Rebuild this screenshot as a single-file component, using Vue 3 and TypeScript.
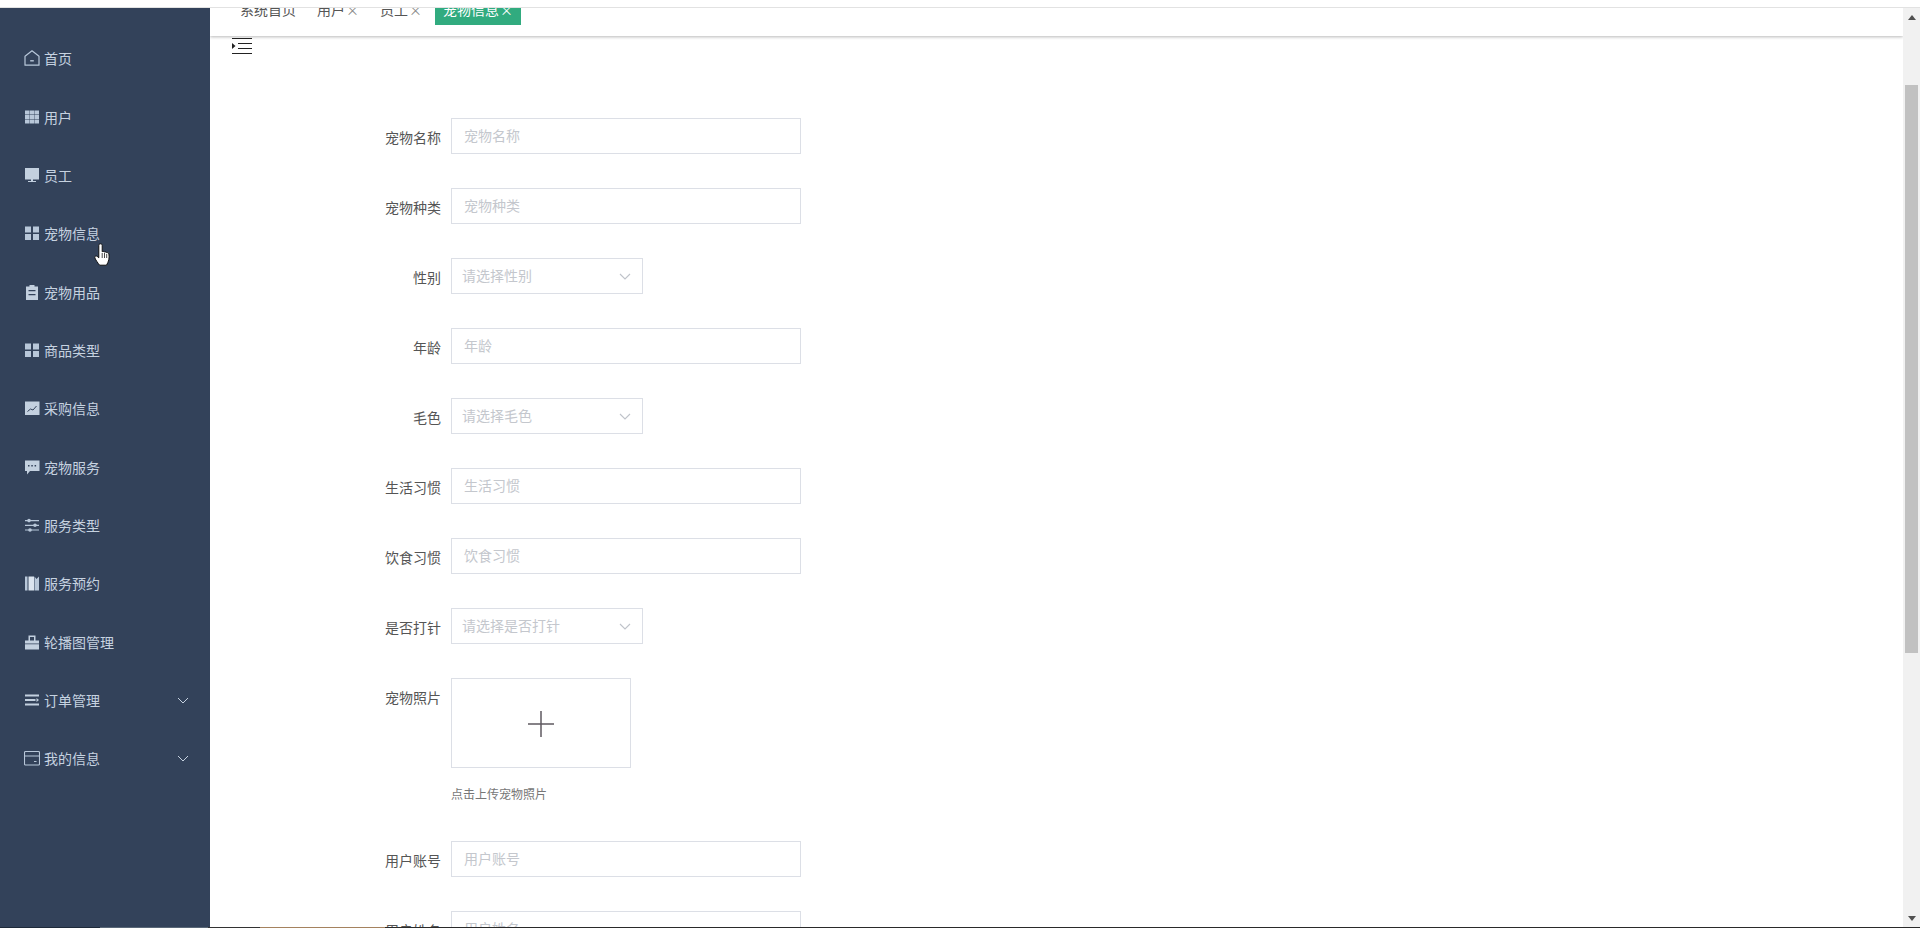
<script setup lang="ts">
interface MenuItem { label: string; icon: string; arrow?: boolean }
const menu: MenuItem[] = [
  { label: '首页', icon: 'home' },
  { label: '用户', icon: 'table' },
  { label: '员工', icon: 'monitor' },
  { label: '宠物信息', icon: 'apps' },
  { label: '宠物用品', icon: 'clip' },
  { label: '商品类型', icon: 'apps' },
  { label: '采购信息', icon: 'chart' },
  { label: '宠物服务', icon: 'chat' },
  { label: '服务类型', icon: 'sliders' },
  { label: '服务预约', icon: 'books' },
  { label: '轮播图管理', icon: 'case' },
  { label: '订单管理', icon: 'list', arrow: true },
  { label: '我的信息', icon: 'wallet', arrow: true },
]
interface Field { label: string; type: 'input' | 'select' | 'upload'; ph?: string }
const fields: Field[] = [
  { label: '宠物名称', type: 'input', ph: '宠物名称' },
  { label: '宠物种类', type: 'input', ph: '宠物种类' },
  { label: '性别', type: 'select', ph: '请选择性别' },
  { label: '年龄', type: 'input', ph: '年龄' },
  { label: '毛色', type: 'select', ph: '请选择毛色' },
  { label: '生活习惯', type: 'input', ph: '生活习惯' },
  { label: '饮食习惯', type: 'input', ph: '饮食习惯' },
  { label: '是否打针', type: 'select', ph: '请选择是否打针' },
  { label: '宠物照片', type: 'upload' },
  { label: '用户账号', type: 'input', ph: '用户账号' },
  { label: '用户姓名', type: 'input', ph: '用户姓名' },
]
</script>

<template>
  <div class="page">
    <div class="topline"></div>
    <div class="main">
      <aside class="side">
        <div v-for="m in menu" :key="m.label" class="item">
          <svg class="ic" viewBox="0 0 16 16">
            <g v-if="m.icon === 'home'" fill="none" stroke="#b8c7d9" stroke-width="1.200">
              <path d="M8 .8 15 6.200V15.200H1V6.200Z" stroke-linejoin="round" /><path d="M6.200 10.800h3.600" stroke-width="1.400" />
            </g>
            <path v-else-if="m.icon === 'table'" fill="#b8c7d9" d="M1 1.500h4.400v4H1zM5.800 1.500h4.400v4H5.800zM10.600 1.500H15v4h-4.400zM1 6h4.400v4H1zM5.800 6h4.400v4H5.800zM10.600 6H15v4h-4.400zM1 10.500h4.400v4H1zM5.800 10.500h4.400v4H5.800zM10.600 10.500H15v4h-4.400z" />
            <path v-else-if="m.icon === 'monitor'" fill="#c3d0df" d="M1 1h14v11.500H1zM4 14h8v1H4zM7 12.500h2V14H7z" />
            <path v-else-if="m.icon === 'apps'" fill="#b8c7d9" d="M1 1.500h6v6H1zM9 1.500h6v6H9zM1 9h6v6H1zM9 9h6v6H9z" />
            <path v-else-if="m.icon === 'clip'" fill="#c3d0df" fill-rule="evenodd" d="M2 2.500h3.500V1h5v1.500H14V16H2zM4.500 6v1.200h7V6zM4.500 10v1.200h7V10z" />
            <g v-else-if="m.icon === 'chart'">
              <path fill="#c3d0df" d="M1 1.500h14.500V15H1z" /><path fill="none" stroke="#33425a" d="M3.500 11.500 6.500 9l2.500 1L12.500 6" />
            </g>
            <g v-else-if="m.icon === 'chat'">
              <path fill="#c3d0df" d="M1 1.500h14.500V12H6l-3 3.500V12H1z" /><path fill="#33425a" d="M4 6h1.500v1.500H4zM7.300 6h1.500v1.500H7.300zM10.600 6h1.500v1.500h-1.500z" />
            </g>
            <g v-else-if="m.icon === 'sliders'" fill="#b8c7d9">
              <path d="M1 3h14v1.200H1zM1 7.700h14v1.200H1zM1 12.400h14v1.200H1z" /><circle cx="5" cy="3.600" r="1.800" /><circle cx="11" cy="8.300" r="1.800" /><circle cx="6" cy="13" r="1.800" />
            </g>
            <g v-else-if="m.icon === 'books'">
              <path fill="#b8c7d9" d="M1 1.500h2.500v14H1z" /><path fill="#dbe4ef" d="M4.500 1.500h5.500v14H4.500z" /><path fill="#b8c7d9" d="M10.500 1.500l2 2.500L15 1.500v14h-4.500z" />
            </g>
            <path v-else-if="m.icon === 'case'" fill="#c3d0df" fill-rule="evenodd" d="M1 6.500h14v3H1zM1 10.300h14V15.500H1zM4.500 6.500V1.500h7v5H10V3H6v3.500z" />
            <path v-else-if="m.icon === 'list'" fill="#c3d0df" d="M1 2.500h14v2H1zM1 7h10.500v2H1zM1 11.500h14v2H1zM12.500 6l2.500 2-2.500 2z" />
            <g v-else-if="m.icon === 'wallet'" fill="none" stroke="#b8c7d9" stroke-width="1.100">
              <rect x=".5" y="1.500" width="15" height="13.500" rx="1" /><path d="M.5 6h15M10 11.500h2.500" />
            </g>
          </svg>
          <span class="lbl">{{ m.label }}</span>
          <svg v-if="m.arrow" class="arr" viewBox="0 0 12 7"><path d="M1 1l5 5 5-5" fill="none" stroke="#c6d2e0" stroke-width="1" /></svg>
        </div>
      </aside>
      <div class="content">
        <header class="tabs">
          <span class="tab">系统首页</span>
          <span class="tab">用户<i>×</i></span>
          <span class="tab">员工<i>×</i></span>
          <span class="tab on">宠物信息<i>×</i></span>
        </header>
        <div class="burger">
          <svg class="burger-ic" viewBox="0 0 20 16" width="20" height="16">
            <path d="M0 .5h20M6 5.500h14M6 10.500h14M0 15.500h20" stroke="#222" stroke-width="1.200" fill="none" />
            <path d="M0 5 3.500 8 0 11z" fill="#222" />
          </svg>
        </div>
        <form class="form">
          <div v-for="f in fields" :key="f.label" class="row" :class="{ tall: f.type === 'upload' }">
            <label class="flabel">{{ f.label }}</label>
            <div v-if="f.type === 'input'" class="box wide">{{ f.ph }}</div>
            <div v-else-if="f.type === 'select'" class="box sel">
              <span>{{ f.ph }}</span>
              <svg class="chev" viewBox="0 0 12 7"><path d="M1 1l5 5 5-5" fill="none" stroke="#bfc3ca" stroke-width="1.100" /></svg>
            </div>
            <div v-else class="up">
              <div class="upbox">
                <svg viewBox="0 0 26 26" width="26" height="26"><path d="M13 0v26M0 13h26" stroke="#5f5a60" stroke-width="1.500" fill="none" /></svg>
              </div>
              <div class="hint">点击上传宠物照片</div>
            </div>
          </div>
        </form>
      </div>
      <div class="sbar">
        <svg class="sarrow" viewBox="0 0 8 5" width="8" height="5"><path d="M4 0 8 5H0z" fill="#505050" /></svg>
        <div class="thumb"></div>
        <svg class="sarrow down" viewBox="0 0 8 5" width="8" height="5"><path d="M0 0h8L4 5z" fill="#505050" /></svg>
      </div>
    </div>
    <svg class="cursor" viewBox="0 0 17 23" width="17" height="23">
      <path d="M6.500 .8c1 0 1.700.7 1.700 1.700v6.200c.9-.5 1.900-.3 2.300.4.800-.4 1.800-.1 2.100.6.900-.3 2.100.2 2.300 1.300.3 1.700.3 4-.1 5.800-.4 1.900-1.300 3.400-2.300 5.400H5.600C4.200 20.400.8 16 .8 14.300c0-1.200 1.400-1.700 2.400-.9l1.600 1.400V2.500c0-1 .7-1.700 1.700-1.700z" fill="#fff" stroke="#111" stroke-width="1" />
      <path d="M8.200 10v5M10.500 10v5M12.700 11v4" stroke="#333" stroke-width=".9" />
    </svg>
    <div class="bottomline"></div>
  </div>
</template>

<style>
html, body { margin: 0; height: 100%; overflow: hidden; background: #fff; }
</style>

<style scoped>
.page {
  position: relative;
  height: 928px;
  display: flex;
  flex-direction: column;
  font-family: "Noto Sans CJK SC", "Liberation Sans", sans-serif;
  overflow: hidden;
}
.topline { height: 7px; background: #fff; border-bottom: 1px solid #e2e2e2; flex: none; }
.main { flex: 1; display: flex; min-height: 0; }
.side { width: 210px; flex: none; background: #33425a; padding-top: 21px; box-sizing: border-box; }
.item { height: 58.35px; display: flex; align-items: center; padding-left: 24px; position: relative; color: #c6d2e0; font-size: 14px; }
.ic { width: 16px; height: 16px; flex: none; }
.lbl { margin-left: 4px; }
.arr { position: absolute; left: 177px; top: 26px; width: 12px; height: 7px; }
.content { flex: 1; min-width: 0; overflow: hidden; position: relative; }
.tabs {
  height: 28px;
  padding: 0 0 11px 30px;
  box-sizing: border-box;
  display: flex;
  align-items: flex-end;
  overflow: hidden;
  gap: 21px;
  box-shadow: 0 1px 3px rgba(0, 0, 0, .28);
  color: #555;
  font-size: 14px;
}
.tab { height: 28px; line-height: 25px; flex: none; white-space: nowrap; }
.tab i { font-style: normal; color: #888; font-size: 13px; margin-left: 1px; }
.tab.on { background: #31ab7f; color: #fff; padding: 0 8px; width: 86px; box-sizing: border-box; margin-left: -8px; }
.tab.on i { color: #fff; }
.burger { height: 16px; margin: 2px 0 0 22px; }
.burger-ic { display: block; }
.form { padding-top: 64px; }
.row { height: 36px; margin-bottom: 34px; display: flex; }
.row.tall { height: 129px; margin-bottom: 34px; }
.flabel { width: 231px; text-align: right; padding-top: 7px; line-height: 24px; color: #555; font-size: 14px; flex: none; box-sizing: border-box; }
.box {
  margin-left: 10px;
  height: 36px;
  box-sizing: border-box;
  border: 1px solid #dcdfe6;
  font-size: 14px;
  color: #c4c7cd;
  line-height: 33px;
  padding-left: 12px;
}
.wide { width: 350px; }
.sel { width: 192px; position: relative; padding-left: 10px; }
.chev { position: absolute; right: 11px; top: 14px; width: 12px; height: 7px; }
.up { margin-left: 10px; }
.upbox { width: 180px; height: 90px; box-sizing: border-box; border: 1px solid #dcdfe6; display: flex; align-items: center; justify-content: center; padding-top: 2px; }
.hint { margin-top: 16px; font-size: 12px; line-height: 20px; color: #777; }
.sbar { width: 17px; flex: none; background: #f1f1f1; position: relative; display: flex; flex-direction: column; align-items: center; }
.sarrow { position: absolute; top: 7px; }
.sarrow.down { top: auto; bottom: 7px; }
.thumb { position: absolute; left: 2px; top: 77px; width: 13px; height: 568px; background: #c1c1c1; }
.cursor { position: absolute; left: 94px; top: 243px; }
.bottomline {
  position: absolute;
  left: 0;
  right: 0;
  bottom: 0;
  height: 1px;
  background: linear-gradient(to right, #1e2a3a 0, #1e2a3a 100px, #5a6878 100px, #5a6878 208px, #333 208px, #333 260px, #a5825f 260px, #a5825f 385px, #2a2a2a 385px);
}
</style>
